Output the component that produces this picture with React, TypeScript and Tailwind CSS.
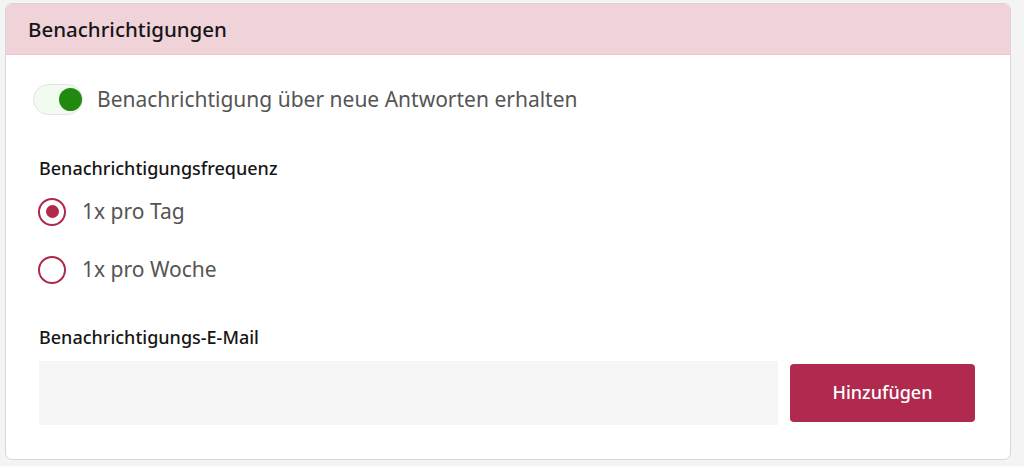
import { FC, useState } from "react";

const Radio: FC<{ label: string; checked: boolean; onSelect: () => void }> = ({ label, checked, onSelect }) => {
  return (
    <label onClick={onSelect} className="flex items-center h-[58px] cursor-pointer">
      <span className="flex items-center justify-center w-[28px] h-[28px] rounded-full border-[2.5px] border-[#b0284c] bg-white">
        {checked && <span className="w-[13px] h-[13px] rounded-full bg-[#b0284c]" />}
      </span>
      <span className="ml-[16px] text-[21px] text-[#555555]">{label}</span>
    </label>
  );
};

const App: FC = () => {
  const [enabled, setEnabled] = useState(true);
  const [freq, setFreq] = useState<"day" | "week">("day");

  return (
    <div className="w-[1024px] h-[466px] bg-[#f4f4f4] pt-[3px] pl-[5px] font-['Noto_Sans',sans-serif]">
      <div className="w-[1006px] h-[457px] bg-white border border-[#d6d6d6] rounded-[7px] overflow-hidden">
        <div className="h-[51px] bg-[#f0d2d9] border-b border-[#ecc6cf] flex items-center pl-[22px]">
          <h2 className="text-[20.5px] font-medium text-[#161616]">Benachrichtigungen</h2>
        </div>

        <div className="pl-[27px] pr-[30px]">
          <div className="flex items-center mt-[29px]">
            <button
              onClick={() => setEnabled(!enabled)}
              className="relative w-[50px] h-[31px] rounded-full border border-[#e2e2e2] bg-[#f1fbef]"
            >
              <span className={`absolute top-[3px] w-[23px] h-[23px] rounded-full bg-[#1f8a0f] ${enabled ? "left-[25px]" : "left-[3px]"}`} />
            </button>
            <span className="ml-[14px] text-[21px] text-[#555555]">Benachrichtigung über neue Antworten erhalten</span>
          </div>

          <div className="mt-[40px] pl-[6px]">
            <div className="text-[18px] font-medium text-[#161616] leading-[24px]">Benachrichtigungsfrequenz</div>
            <div className="mt-[3px] -ml-[1px]">
              <Radio label="1x pro Tag" checked={freq === "day"} onSelect={() => setFreq("day")} />
              <Radio label="1x pro Woche" checked={freq === "week"} onSelect={() => setFreq("week")} />
            </div>

            <div className="mt-[26px] text-[18px] font-medium text-[#161616] leading-[24px]">Benachrichtigungs-E-Mail</div>
            <div className="flex items-center mt-[12px]">
              <input className="w-[739px] h-[64px] bg-[#f5f5f5] outline-none px-3 text-[18px]" />
              <button className="ml-[12px] w-[185px] h-[58px] rounded-[4px] bg-[#b02a4f] text-white text-[18px] font-medium">
                Hinzufügen
              </button>
            </div>
          </div>
        </div>
      </div>
    </div>
  );
};

export default App;
